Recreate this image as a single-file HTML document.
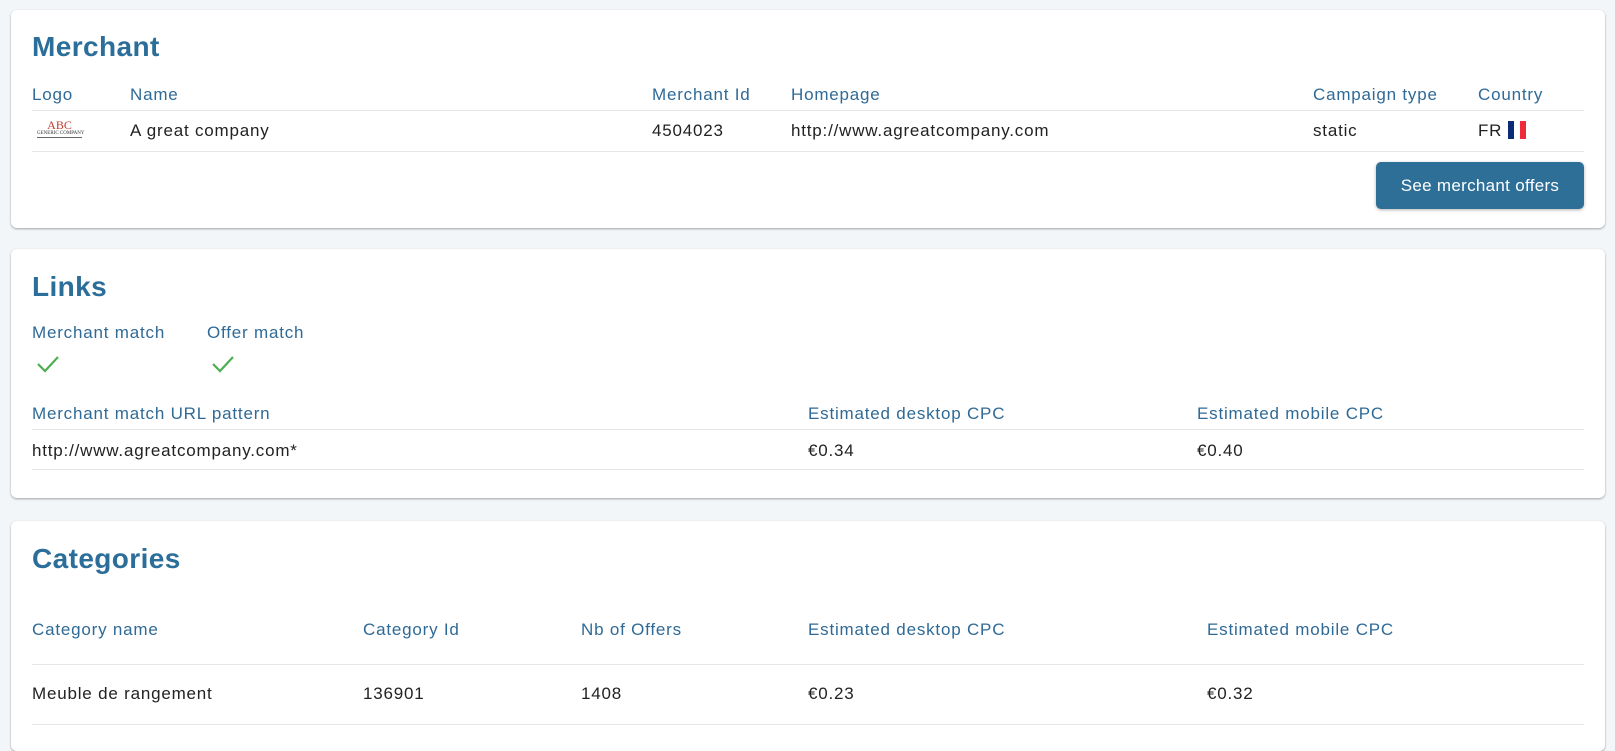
<!DOCTYPE html>
<html><head><meta charset="utf-8"><style>
*{margin:0;padding:0;box-sizing:border-box}
body{width:1615px;height:730px;background:#f3f6f9;font-family:"Liberation Sans",sans-serif;position:relative;overflow:hidden;color:#222}
.card{position:absolute;left:11px;width:1594px;background:#fff;border-radius:6px;box-shadow:0 1px 2px rgba(0,0,0,.35)}
.t{position:absolute;white-space:nowrap;font-size:17px;letter-spacing:.8px;line-height:20px}
.h{color:#2f6a96}
.title{position:absolute;left:21px;font-size:28px;font-weight:bold;color:#2c6e9a;line-height:32px;letter-spacing:.4px}
.line{position:absolute;left:21px;right:21px;height:1px;background:#e6e6e6}
.btn{position:absolute;left:1365px;top:152px;width:208px;height:47px;background:#2e6f98;border-radius:5px;color:#fff;font-size:17px;letter-spacing:.3px;line-height:47px;text-align:center;box-shadow:0 1px 3px rgba(0,0,0,.3)}
</style></head><body>
<div class="card" style="top:10px;height:218px">
 <div class="title" style="top:21px">Merchant</div>
 <div class="t h" style="left:21px;top:75px">Logo</div>
 <div class="t h" style="left:119px;top:75px">Name</div>
 <div class="t h" style="left:641px;top:75px">Merchant Id</div>
 <div class="t h" style="left:780px;top:75px">Homepage</div>
 <div class="t h" style="left:1302px;top:75px">Campaign type</div>
 <div class="t h" style="left:1467px;top:75px">Country</div>
 <div class="line" style="top:100px"></div>
 <div style="position:absolute;left:26px;top:109px;width:45px;height:24px;text-align:center;font-family:'Liberation Serif',serif">
  <div style="color:#c0392b;font-size:12px;line-height:12px">ABC</div>
  <div style="font-size:5px;line-height:6px;color:#333;border-bottom:1px solid #666;white-space:nowrap">GENERIC COMPANY</div>
 </div>
 <div class="t" style="left:119px;top:111px">A great company</div>
 <div class="t" style="left:641px;top:111px">4504023</div>
 <div class="t" style="left:780px;top:111px">http://www.agreatcompany.com</div>
 <div class="t" style="left:1302px;top:111px">static</div>
 <div class="t" style="left:1467px;top:111px">FR <span style="display:inline-block;width:18px;height:18px;vertical-align:-3px;background:linear-gradient(90deg,#0b2a7a 33%,#fff 33%,#fff 66%,#ef2b3b 66%)"></span></div>
 <div class="line" style="top:141px"></div>
 <div class="btn">See merchant offers</div>
</div>

<div class="card" style="top:249px;height:249px">
 <div class="title" style="top:22px">Links</div>
 <div class="t h" style="left:21px;top:74px">Merchant match</div>
 <div class="t h" style="left:196px;top:74px">Offer match</div>
 <svg style="position:absolute;left:25px;top:106px" width="24" height="18" viewBox="0 0 24 18"><path d="M2 9l7 7L22 2" fill="none" stroke="#4caf50" stroke-width="2.2"/></svg>
 <svg style="position:absolute;left:200px;top:106px" width="24" height="18" viewBox="0 0 24 18"><path d="M2 9l7 7L22 2" fill="none" stroke="#4caf50" stroke-width="2.2"/></svg>
 <div class="t h" style="left:21px;top:155px">Merchant match URL pattern</div>
 <div class="t h" style="left:797px;top:155px">Estimated desktop CPC</div>
 <div class="t h" style="left:1186px;top:155px">Estimated mobile CPC</div>
 <div class="line" style="top:180px"></div>
 <div class="t" style="left:21px;top:192px">http://www.agreatcompany.com*</div>
 <div class="t" style="left:797px;top:192px">€0.34</div>
 <div class="t" style="left:1186px;top:192px">€0.40</div>
 <div class="line" style="top:220px"></div>
</div>

<div class="card" style="top:521px;height:230px">
 <div class="title" style="top:22px">Categories</div>
 <div class="t h" style="left:21px;top:99px">Category name</div>
 <div class="t h" style="left:352px;top:99px">Category Id</div>
 <div class="t h" style="left:570px;top:99px">Nb of Offers</div>
 <div class="t h" style="left:797px;top:99px">Estimated desktop CPC</div>
 <div class="t h" style="left:1196px;top:99px">Estimated mobile CPC</div>
 <div class="line" style="top:143px"></div>
 <div class="t" style="left:21px;top:163px">Meuble de rangement</div>
 <div class="t" style="left:352px;top:163px">136901</div>
 <div class="t" style="left:570px;top:163px">1408</div>
 <div class="t" style="left:797px;top:163px">€0.23</div>
 <div class="t" style="left:1196px;top:163px">€0.32</div>
 <div class="line" style="top:203px"></div>
</div>
</body></html>
